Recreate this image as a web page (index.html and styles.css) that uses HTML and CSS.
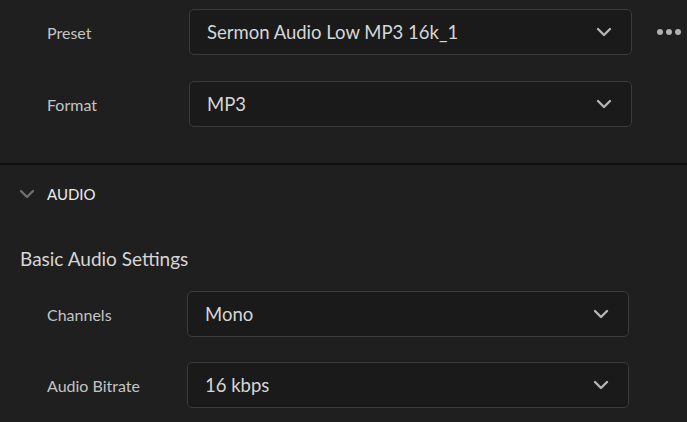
FILE: index.html
```html
<!DOCTYPE html>
<html>
<head>
<meta charset="utf-8">
<link rel="stylesheet" href="styles.css">
</head>
<body>
<div class="panel">
  <section class="top">
    <div class="row">
      <div class="label">Preset</div>
      <div class="select"><span class="value">Sermon Audio Low MP3 16k_1</span>
        <svg class="chev" width="16" height="10" viewBox="0 0 16 10"><path d="M2 2 L8 8 L14 2" fill="none" stroke="#b4b4b4" stroke-width="2.4" stroke-linecap="round" stroke-linejoin="round"/></svg>
      </div>
      <div class="more"><span></span><span></span><span></span></div>
    </div>
    <div class="row">
      <div class="label">Format</div>
      <div class="select"><span class="value">MP3</span>
        <svg class="chev" width="16" height="10" viewBox="0 0 16 10"><path d="M2 2 L8 8 L14 2" fill="none" stroke="#b4b4b4" stroke-width="2.4" stroke-linecap="round" stroke-linejoin="round"/></svg>
      </div>
    </div>
  </section>
  <section class="audio">
    <div class="header">
      <svg class="toggle" width="16" height="10" viewBox="0 0 16 10"><path d="M2 2 L8 8 L14 2" fill="none" stroke="#6f6f6f" stroke-width="2.4" stroke-linecap="round" stroke-linejoin="round"/></svg>
      <span class="title">AUDIO</span>
    </div>
    <h2 class="subhead">Basic Audio Settings</h2>
    <div class="row row2">
      <div class="label">Channels</div>
      <div class="select"><span class="value">Mono</span>
        <svg class="chev" width="16" height="10" viewBox="0 0 16 10"><path d="M2 2 L8 8 L14 2" fill="none" stroke="#b4b4b4" stroke-width="2.4" stroke-linecap="round" stroke-linejoin="round"/></svg>
      </div>
    </div>
    <div class="row row2">
      <div class="label">Audio Bitrate</div>
      <div class="select"><span class="value">16 kbps</span>
        <svg class="chev" width="16" height="10" viewBox="0 0 16 10"><path d="M2 2 L8 8 L14 2" fill="none" stroke="#b4b4b4" stroke-width="2.4" stroke-linecap="round" stroke-linejoin="round"/></svg>
      </div>
    </div>
  </section>
</div>
</body>
</html>
```
FILE: styles.css
```css
html, body {
  margin: 0;
  padding: 0;
  background: #1f1f1f;
  font-family: "Lato", "Open Sans", sans-serif;
  overflow: hidden;
}
.panel {
  width: 687px;
  height: 422px;
}
.top {
  padding-top: 9px;
  height: 154px;
  box-sizing: content-box;
  display: flex;
  flex-direction: column;
  gap: 26px;
  border-bottom: 2px solid #0e0e0e;
}
.row {
  display: flex;
  align-items: center;
  height: 46px;
}
.label {
  width: 142px;
  padding-left: 47px;
  font-size: 16px;
  color: #c4c4c4;
}
.select {
  width: 443px;
  height: 46px;
  box-sizing: border-box;
  border: 1px solid #3b3b3b;
  border-radius: 5px;
  background: #1a1a1a;
  display: flex;
  align-items: center;
  padding-left: 17px;
  padding-right: 19px;
}
.value {
  flex: 1;
  font-size: 18.5px;
  color: #d6d6d6;
}
.chev {
  display: block;
}
.more {
  display: flex;
  gap: 3px;
  margin-left: 25px;
}
.more span {
  width: 6px;
  height: 6px;
  border-radius: 50%;
  background: #b0b0b0;
}
.audio {
  padding-top: 18px;
}
.header {
  display: flex;
  align-items: center;
  height: 22px;
  padding-left: 19px;
}
.toggle {
  display: block;
  margin-right: 12px;
}
.title {
  font-size: 15px;
  color: #ececec;
}
.subhead {
  margin: 0;
  padding-left: 20px;
  margin-top: 42px;
  font-size: 19px;
  font-weight: normal;
  color: #d6d6d6;
  line-height: 24px;
}
.row2 {
  margin-top: 20px;
}
.row2 + .row2 {
  margin-top: 25px;
}
.row2 .label {
  width: 140px;
}
.row2 .select {
  width: 442px;
}
```
